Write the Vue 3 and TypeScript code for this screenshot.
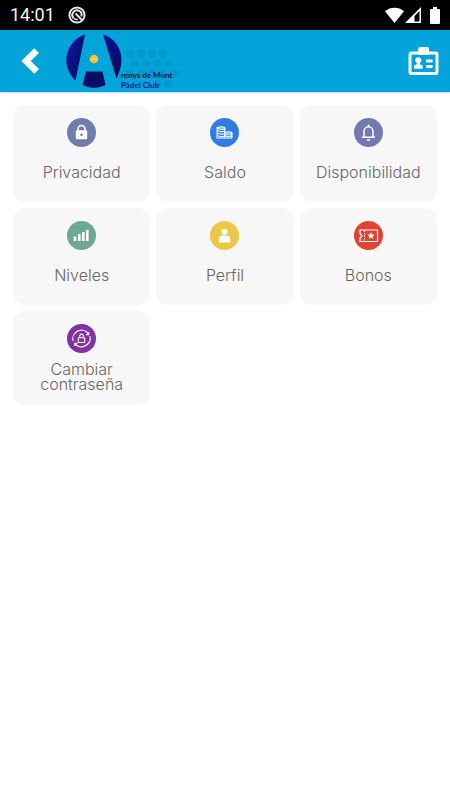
<script setup lang="ts">
type IconName = 'lock' | 'coins' | 'bell' | 'bars' | 'person' | 'ticket' | 'renew'

interface MenuItem {
  label: string
  icon: IconName
  twoLines?: boolean
}

const items: MenuItem[] = [
  { label: 'Privacidad', icon: 'lock' },
  { label: 'Saldo', icon: 'coins' },
  { label: 'Disponibilidad', icon: 'bell' },
  { label: 'Niveles', icon: 'bars' },
  { label: 'Perfil', icon: 'person' },
  { label: 'Bonos', icon: 'ticket' },
  { label: 'Cambiar contraseña', icon: 'renew', twoLines: true },
]

const dots: [number, number][] = [
  [75, 24], [86, 24], [97, 24], [108, 24],
  [80, 34], [91, 34], [102, 34], [113, 34],
  [75, 43], [86, 43], [97, 43], [108, 43], [119, 43],
  [102, 54], [113, 54],
]
</script>

<template>
  <div class="screen">
    <div class="status">
      <span class="time">14:01</span>
      <svg class="app-mark" width="18" height="18" viewBox="0 0 18 18" aria-hidden="true">
        <circle cx="9" cy="9" r="7.6" fill="none" stroke="#e8e8e8" stroke-width="2" />
        <path d="M5.500 12A4.600 4.600 0 1 1 13.300 10.500" fill="none" stroke="#e8e8e8" stroke-width="2" />
        <path d="M7.500 7.500l7 7" stroke="#e8e8e8" stroke-width="2" />
        <path d="M5.500 12q2 2 4.500 1.500" fill="none" stroke="#e8e8e8" stroke-width="1.500" />
      </svg>
      <div class="signals">
        <svg width="20" height="17" viewBox="0 0 20 17" aria-hidden="true">
          <path d="M0 4.300C5.500 -0.300 13.500 -0.300 19 4.300L9.500 16z" fill="#fff" />
        </svg>
        <svg width="17" height="17" viewBox="0 0 17 17" aria-hidden="true">
          <path d="M16 0v16H0z" fill="#fff" />
          <path d="M14.500 4v10.500H9.500V9z" fill="#000" />
        </svg>
        <svg class="battery" width="10" height="17" viewBox="0 0 10 17" aria-hidden="true">
          <path d="M3 0h4v2h2q1 0 1 1v13q0 1-1 1H1q-1 0-1-1V3q0-1 1-1h2z" fill="#fff" />
        </svg>
      </div>
    </div>

    <header class="bar">
      <button class="icon-button" type="button" aria-label="Volver">
        <svg width="20" height="28" viewBox="0 0 20 28">
          <path d="M14.300 1.300L19 6 10.700 14 19 22 14.300 26.700 1.300 14z" fill="#fff" />
        </svg>
      </button>
      <svg class="logo" width="125" height="62" viewBox="0 0 125 62" role="img" aria-label="Arenys de Munt Pàdel Club">
        <defs>
          <linearGradient id="left-fill" x1="0" y1="0" x2="1" y2="1">
            <stop offset="0" stop-color="#0c16ad" />
            <stop offset="1" stop-color="#080b50" />
          </linearGradient>
          <linearGradient id="right-fill" x1="0" y1="0" x2="0" y2="1">
            <stop offset="0" stop-color="#0c129b" />
            <stop offset="1" stop-color="#080946" />
          </linearGradient>
        </defs>
        <circle v-for="([x, y], i) in dots" :key="i" :cx="x" :cy="y" r="4.300" fill="#0299d0" />
        <path d="M30 4.500A27 27 0 0 0 20.500 50.500z" fill="url(#left-fill)" />
        <path d="M48 4.500C63 9 70 25 64.500 41L61.500 48.500z" fill="url(#right-fill)" />
        <path d="M31 41.500h16.500l3 13.500q-11.500 6-23 0z" fill="#090d66" />
        <circle cx="39" cy="29" r="4.300" fill="#f8c22c" />
        <path d="M35.500 29.500q3-2 7 0" fill="none" stroke="#fff08a" stroke-width="0.800" />
        <text x="66" y="48" class="logo-name">renys de Munt</text>
        <text x="66" y="58" class="logo-club">Pàdel Club</text>
      </svg>
      <button class="icon-button card-button" type="button" aria-label="Carnet">
        <svg width="31" height="30" viewBox="0 0 31 30">
          <rect x="2" y="7" width="27" height="20.500" rx="1.500" fill="none" stroke="#fff" stroke-width="3" />
          <rect x="10.300" y="1" width="10.700" height="8" rx="1.500" fill="#fff" />
          <circle cx="10.300" cy="14.300" r="3" fill="#fff" />
          <path d="M6 22.700v-2q0-2.200 2.500-2.200h3.700q2.500 0 2.500 2.200v2z" fill="#fff" />
          <path d="M8.800 16h3v4h-3z" fill="#fff" />
          <path d="M19.300 15h4.200M19.300 20.500h4.200" stroke="#fff" stroke-width="2.800" stroke-linecap="round" />
        </svg>
      </button>
    </header>

    <main class="menu">
      <button v-for="item in items" :key="item.icon" class="tile" type="button">
        <svg class="badge" :class="item.icon" viewBox="0 0 29 29" aria-hidden="true">
          <g v-if="item.icon === 'lock'">
            <path d="M11 13v-2a3.500 3.500 0 0 1 7 0v2" fill="none" stroke="#fff" stroke-width="1.500" />
            <rect x="8.800" y="12.300" width="11.400" height="9" rx="1" fill="#fff" />
            <circle cx="14.500" cy="16.700" r="1.300" fill="#6f7da9" />
          </g>
          <g v-else-if="item.icon === 'coins'" fill="none" stroke="#fff" stroke-width="1.200">
            <path d="M7.200 9v11.500M7 9.500h2M7 20h15" />
            <ellipse cx="11.500" cy="10" rx="3.300" ry="1.200" />
            <path d="M14.800 10v9.500M8.200 12.500c1 1.500 5.600 1.500 6.600 0M8.200 15c1 1.500 5.600 1.500 6.600 0M8.200 17.500c1 1.500 5.600 1.500 6.600 0" />
            <ellipse cx="18.500" cy="15" rx="3.400" ry="1.200" />
            <path d="M21.900 15v5M15.100 17.300c1 1.500 5.800 1.500 6.800 0" />
          </g>
          <g v-else-if="item.icon === 'bell'" fill="none" stroke="#fff" stroke-width="1.500">
            <path d="M10 19v-5.500a4.500 4.700 0 0 1 9 0V19M8 19.300h13M14.500 6.500v2.500" />
            <path d="M13 21.900h3" />
          </g>
          <path
            v-else-if="item.icon === 'bars'"
            d="M6.700 15.500h2.600V20H6.700zM11 13h2.600v7H11zM15 11h2.600v9H15zM19 9h2.600v11H19z"
            fill="#fff"
          />
          <g v-else-if="item.icon === 'person'" fill="#fff">
            <circle cx="14.500" cy="10.700" r="3" />
            <path d="M8.700 21.500v-3q0-4 4-4h3.600q4 0 4 4v3z" />
          </g>
          <g v-else-if="item.icon === 'ticket'">
            <path d="M6 9h17.500v11.500H6v-3.500l2-2.200-2-2.300z" fill="none" stroke="#fff" stroke-width="1.200" />
            <path d="M10.500 9.500v11" stroke="#fff" stroke-width="1" stroke-dasharray="1.500 1" />
            <path d="M17 11.300l1 2.300 2.500.2-1.900 1.600.6 2.500-2.200-1.300-2.200 1.300.6-2.500-1.900-1.600 2.500-.2z" fill="#fff" />
          </g>
          <g v-else fill="none" stroke="#fff" stroke-width="1.100">
            <path d="M6 17A8.800 8.800 0 0 1 21 9M23 12A8.800 8.800 0 0 1 8.500 20.500" />
            <path d="M8 9.500A8 8 0 0 1 14.500 6M21 19.500A8 8 0 0 1 14.500 23" stroke-width="0.700" />
            <path d="M22 8v3h-3zM7.500 22v-3h3z" fill="#fff" stroke-width="0.500" />
            <rect x="11.300" y="13.700" width="6.400" height="4.800" rx="0.500" />
            <path d="M12.700 13.500v-1.500a1.800 1.900 0 0 1 3.600 0v1.500" />
          </g>
        </svg>
        <span class="label" :class="{ wrapped: item.twoLines }">{{ item.label }}</span>
      </button>
    </main>
  </div>
</template>

<style>
body {
  margin: 0;
  background: #fff;
}
</style>

<style scoped>
.screen {
  min-height: 100vh;
  background: #fff;
  font-family: Inter, "Liberation Sans", sans-serif;
}

.status {
  display: flex;
  align-items: center;
  height: 30px;
  padding: 0 10px;
  background: #000;
  color: #f2f2f2;
}

.time {
  font: 18px/30px Roboto, sans-serif;
}

.app-mark {
  margin-left: 13px;
}

.signals {
  display: flex;
  align-items: center;
  margin-left: auto;
}

.battery {
  margin-left: 8px;
}

.bar {
  display: flex;
  align-items: center;
  height: 62px;
  padding: 0 11px 0 20px;
  background: #02a4d9;
  box-shadow: 0 1px 2px #9aa9b580;
}

.icon-button {
  display: flex;
  padding: 0;
  border: 0;
  background: none;
}

.logo {
  margin-left: 15px;
}

.logo-name,
.logo-club {
  font: bold 8px Lato, sans-serif;
  fill: #10142e;
}

.logo-club {
  fill: #0a10a0;
}

.card-button {
  margin-left: auto;
}

.menu {
  display: grid;
  grid-template-columns: repeat(3, 1fr);
  gap: 6px;
  padding: 13px;
}

.tile {
  display: flex;
  flex-direction: column;
  align-items: center;
  gap: 9px;
  padding: 13px 12px;
  border: 0;
  border-radius: 12px;
  background: #f7f7f7;
  color: #666;
  font-family: inherit;
}

.badge {
  width: 29px;
  height: 29px;
  border-radius: 50%;
}

.lock { background: #6f7da9; }
.coins { background: #2f7de1; }
.bell { background: #747aaf; }
.bars { background: #6da893; }
.person { background: #edc748; }
.ticket { background: #e2422f; }
.renew { background: #8330a3; }

.label {
  font-size: 16px;
  font-weight: 300;
  line-height: 33px;
}

.wrapped {
  max-width: 96px;
  line-height: 15px;
}
</style>
